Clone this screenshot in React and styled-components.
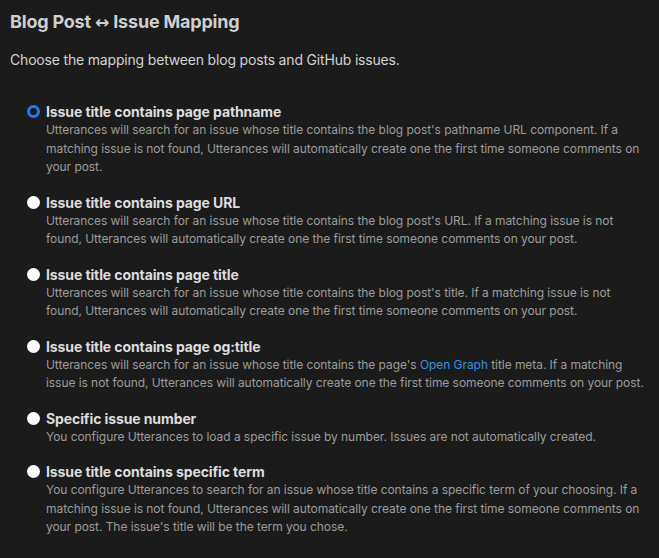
import React from "react";
import styled, { createGlobalStyle } from "styled-components";

const Global = createGlobalStyle`
  html, body { margin: 0; padding: 0; background: #1b1b1b; }
  body { font-family: Inter, "Noto Sans", sans-serif; -webkit-font-smoothing: antialiased; }
`;

const Page = styled.div`
  padding: 10px 10px 20px 10px;
  background: #1b1b1b;
  min-height: 558px;
  box-sizing: border-box;
`;

const Title = styled.h2`
  margin: 0;
  font-size: 18px;
  line-height: 24px;
  font-weight: 700;
  letter-spacing: -0.2px;
  color: #cfcfcf;
`;

const Arrow = styled.span`
  font-family: "DejaVu Sans", sans-serif;
  font-size: 17px;
  font-weight: 700;
  letter-spacing: 0;
`;

const Lead = styled.p`
  margin: 16px 0 0 0;
  font-size: 14px;
  line-height: 20px;
  letter-spacing: -0.18px;
  color: #d2d2d2;
`;

const List = styled.div`
  margin-top: 32px;
  padding-left: 17px;
  display: flex;
  flex-direction: column;
  gap: 16px;
`;

const Option = styled.label`
  display: grid;
  grid-template-columns: 13px 1fr;
  column-gap: 6px;
  align-items: start;
  cursor: pointer;
`;

const Radio = styled.span`
  width: 13px;
  height: 13px;
  margin-top: 3px;
  border-radius: 50%;
  box-sizing: border-box;
  background: ${(p) => (p.$checked ? "#1b1b1b" : "#ffffff")};
  border: ${(p) => (p.$checked ? "3px solid #1f7cf2" : "none")};
`;

const Body = styled.div`
  display: flex;
  flex-direction: column;
`;

const Label = styled.span`
  font-size: 14px;
  line-height: 19px;
  font-weight: 700;
  letter-spacing: -0.1px;
  color: #dcdcdc;
`;

const Desc = styled.span`
  font-size: 12px;
  line-height: 18.5px;
  letter-spacing: -0.06px;
  color: #9c9c9c;
`;

const Link = styled.a`
  color: #3a8ee0;
  text-decoration: none;
`;

const options = [
  {
    label: "Issue title contains page pathname",
    desc: "Utterances will search for an issue whose title contains the blog post's pathname URL component. If a matching issue is not found, Utterances will automatically create one the first time someone comments on your post.",
    checked: true,
  },
  {
    label: "Issue title contains page URL",
    desc: "Utterances will search for an issue whose title contains the blog post's URL. If a matching issue is not found, Utterances will automatically create one the first time someone comments on your post.",
  },
  {
    label: "Issue title contains page title",
    desc: "Utterances will search for an issue whose title contains the blog post's title. If a matching issue is not found, Utterances will automatically create one the first time someone comments on your post.",
  },
  {
    label: "Issue title contains page og:title",
    desc: (
      <>
        Utterances will search for an issue whose title contains the page's{" "}
        <Link href="#">Open Graph</Link> title meta. If a matching issue is not found, Utterances will automatically create one the first time someone comments on your post.
      </>
    ),
  },
  {
    label: "Specific issue number",
    desc: "You configure Utterances to load a specific issue by number. Issues are not automatically created.",
  },
  {
    label: "Issue title contains specific term",
    desc: "You configure Utterances to search for an issue whose title contains a specific term of your choosing. If a matching issue is not found, Utterances will automatically create one the first time someone comments on your post. The issue's title will be the term you chose.",
  },
];

export default function App() {
  return (
    <>
      <Global />
      <Page>
        <Title>
          Blog Post <Arrow>↔</Arrow> Issue Mapping
        </Title>
        <Lead>Choose the mapping between blog posts and GitHub issues.</Lead>
        <List>
          {options.map((o, i) => (
            <Option key={i}>
              <Radio $checked={o.checked} />
              <Body>
                <Label>{o.label}</Label>
                <Desc>{o.desc}</Desc>
              </Body>
            </Option>
          ))}
        </List>
      </Page>
    </>
  );
}
